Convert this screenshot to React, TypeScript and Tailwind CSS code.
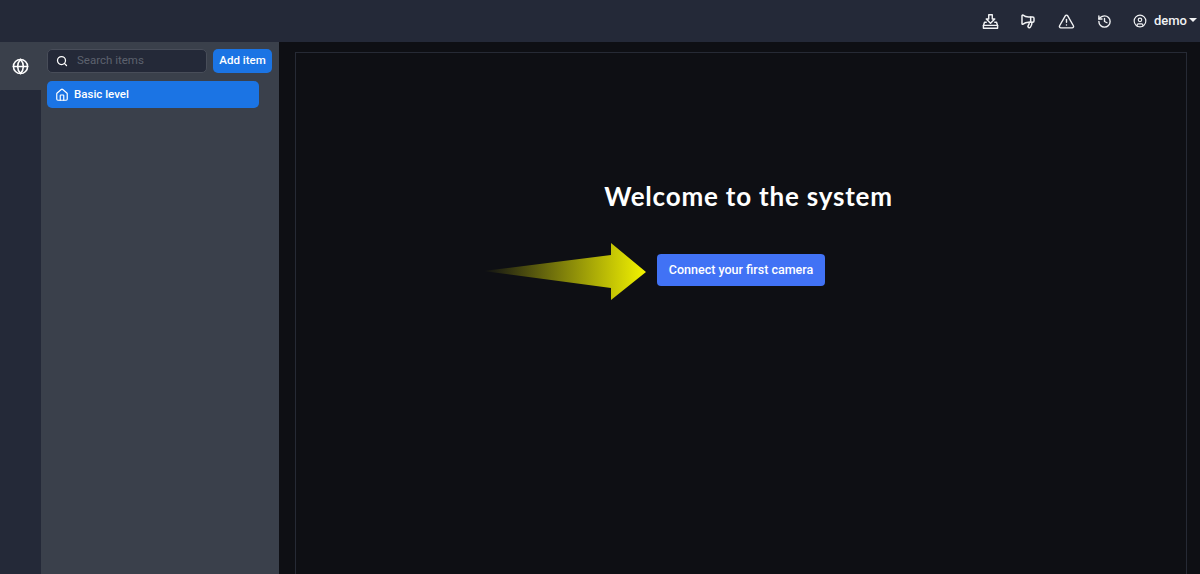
import { CircleUser, Globe, History, House, Megaphone, Search, TriangleAlert } from "lucide-react";

function InstallIcon() {
  return (
    <svg viewBox="0 0 24 24" width={17} height={17} fill="none" stroke="currentColor" strokeWidth={2} strokeLinejoin="round" strokeLinecap="round">
      <path d="M9.5 2.5h5v6h3.5l-6 6-6-6h3.5z" />
      <path d="M6 13H3.5L2 18v3.5h20V18l-1.5-5H18" />
      <path d="M2 17.5h20" />
    </svg>
  );
}

function Arrow() {
  return (
    <svg viewBox="0 0 163 58" width={163} height={58} className="block">
      <defs>
        <linearGradient id="arrow-fill" x1="0" x2="1" y1="0" y2="0">
          <stop offset="0" stopColor="#0e0f14" />
          <stop offset="1" stopColor="#f4f400" />
        </linearGradient>
      </defs>
      <polygon points="0,28 128,12 128,0 163,29 128,57 128,45" fill="url(#arrow-fill)" />
    </svg>
  );
}

export default function App() {
  return (
    <div className="h-[574px] w-[1200px] overflow-hidden flex flex-col bg-[#0e0f14] font-['Roboto',sans-serif]">
      <header className="h-[42px] shrink-0 bg-[#242938] flex items-center justify-end text-[#f1f2f4]">
        <div className="w-[38px] flex justify-center"><InstallIcon /></div>
        <div className="w-[38px] flex justify-center"><Megaphone size={16} strokeWidth={2.2} className="-scale-x-100" /></div>
        <div className="w-[38px] flex justify-center"><TriangleAlert size={17} strokeWidth={2} /></div>
        <div className="w-[38px] flex justify-center"><History size={15} strokeWidth={2.2} /></div>
        <div className="ml-[10px] mr-[2px] flex items-center">
          <CircleUser size={14} strokeWidth={2} />
          <span className="ml-[7px] text-[13px] font-medium">demo</span>
          <span className="ml-[2px] mr-[1px] w-0 h-0 border-x-[4px] border-x-transparent border-t-[4px] border-t-[#f1f2f4] -translate-y-[1px]" />
        </div>
      </header>

      <div className="flex-1 flex min-h-0">
        <nav className="w-[41px] shrink-0 bg-[#242938] flex flex-col">
          <div className="h-[48px] bg-[#3a404b] flex items-center justify-center text-white">
            <Globe size={17} strokeWidth={2.2} />
          </div>
        </nav>

        <aside className="w-[238px] shrink-0 bg-[#3a404b] pl-[6px] pt-[7px]">
          <div className="flex gap-[6px] w-[225px]">
            <div className="h-[24px] flex-1 rounded-[5px] bg-[#242938] border border-[#484d59] flex items-center pl-[8px] gap-[9px]">
              <Search size={12} strokeWidth={2.5} className="text-white" />
              <span className="text-[11.5px] text-[#5d626e]">Search items</span>
            </div>
            <button className="h-[24px] w-[59px] rounded-[5px] bg-[#1b74e4] text-white text-[11.5px] font-medium">Add item</button>
          </div>
          <div className="mt-[8px] h-[27px] w-[212px] rounded-[5px] bg-[#1b74e4] flex items-center pl-[8px] text-white">
            <House size={14} strokeWidth={2} />
            <span className="ml-[5px] text-[11.5px] font-medium">Basic level</span>
          </div>
        </aside>

        <main className="flex-1 pl-[16px] pr-[13px] pt-[10px]">
          <div className="h-full border border-[#262a35] border-b-0 flex flex-col items-center pt-[127px]">
            <h1 className="ml-[15px] text-[26px] leading-[32px] font-bold tracking-[0.8px] text-white font-['Lato',sans-serif]">Welcome to the system</h1>
            <div className="relative mt-[42px]">
              <div className="absolute right-full mr-[11px] top-[-11px]">
                <Arrow />
              </div>
              <button className="h-[32px] w-[168px] rounded-[4px] bg-[#4172f5] text-white text-[12.5px] font-medium">Connect your first camera</button>
            </div>
          </div>
        </main>
      </div>
    </div>
  );
}
